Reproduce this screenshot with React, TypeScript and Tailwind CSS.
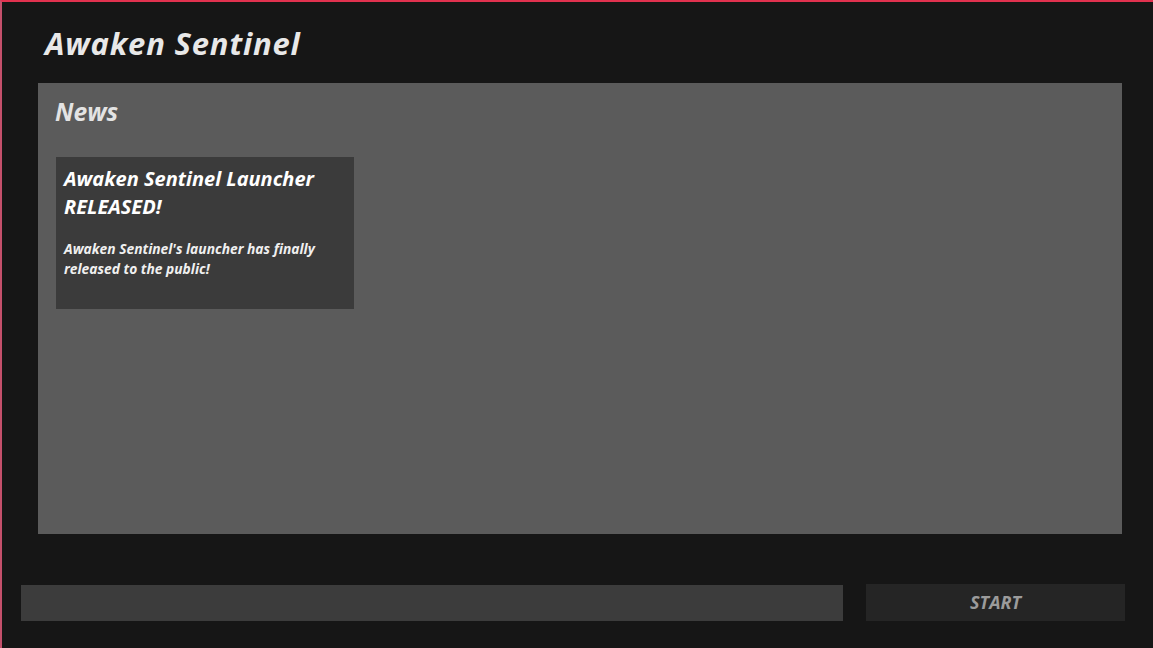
export default function App() {
  return (
    <div
      className="w-[1153px] h-[648px] bg-[#161616] border-t-2 border-l-2 border-t-[#e2324f] border-l-[#c4506b] flex flex-col overflow-hidden italic"
      style={{ fontFamily: '"Open Sans", "Noto Sans", sans-serif' }}
    >
      {/* Header */}
      <div className="pl-[43px] pt-[21px] h-[81px]">
        <h1 className="text-[31px] leading-[40px] font-bold text-[#e8e8e8] tracking-[0.8px]">Awaken Sentinel</h1>
      </div>

      {/* News panel */}
      <div className="ml-[36px] w-[1084px] h-[451px] bg-[#5b5b5b] px-[18px] pt-[12px]">
        <h2 className="text-[24.5px] leading-[34px] font-bold text-[#e3e3e3] -ml-[1px]">News</h2>
        <div className="mt-[28px] w-[298px] h-[152px] bg-[#3b3b3b] px-[8px] pt-[8px]">
          <h3 className="text-[20px] leading-[28px] font-bold text-white">Awaken Sentinel Launcher RELEASED!</h3>
          <p className="mt-[18px] text-[13.8px] leading-[20px] font-bold text-[#f0f0f0]">
            Awaken Sentinel's launcher has finally released to the public!
          </p>
        </div>
      </div>

      {/* Bottom bar */}
      <div className="flex items-center pl-[19px] mt-[51px] gap-[23px]">
        <div className="w-[822px] h-[36px] bg-[#3c3c3c]" />
        <button className="w-[259px] h-[37px] bg-[#252525] text-[#9b9b9b] text-[18px] font-bold italic -mt-[1px]">
          START
        </button>
      </div>
    </div>
  );
}
